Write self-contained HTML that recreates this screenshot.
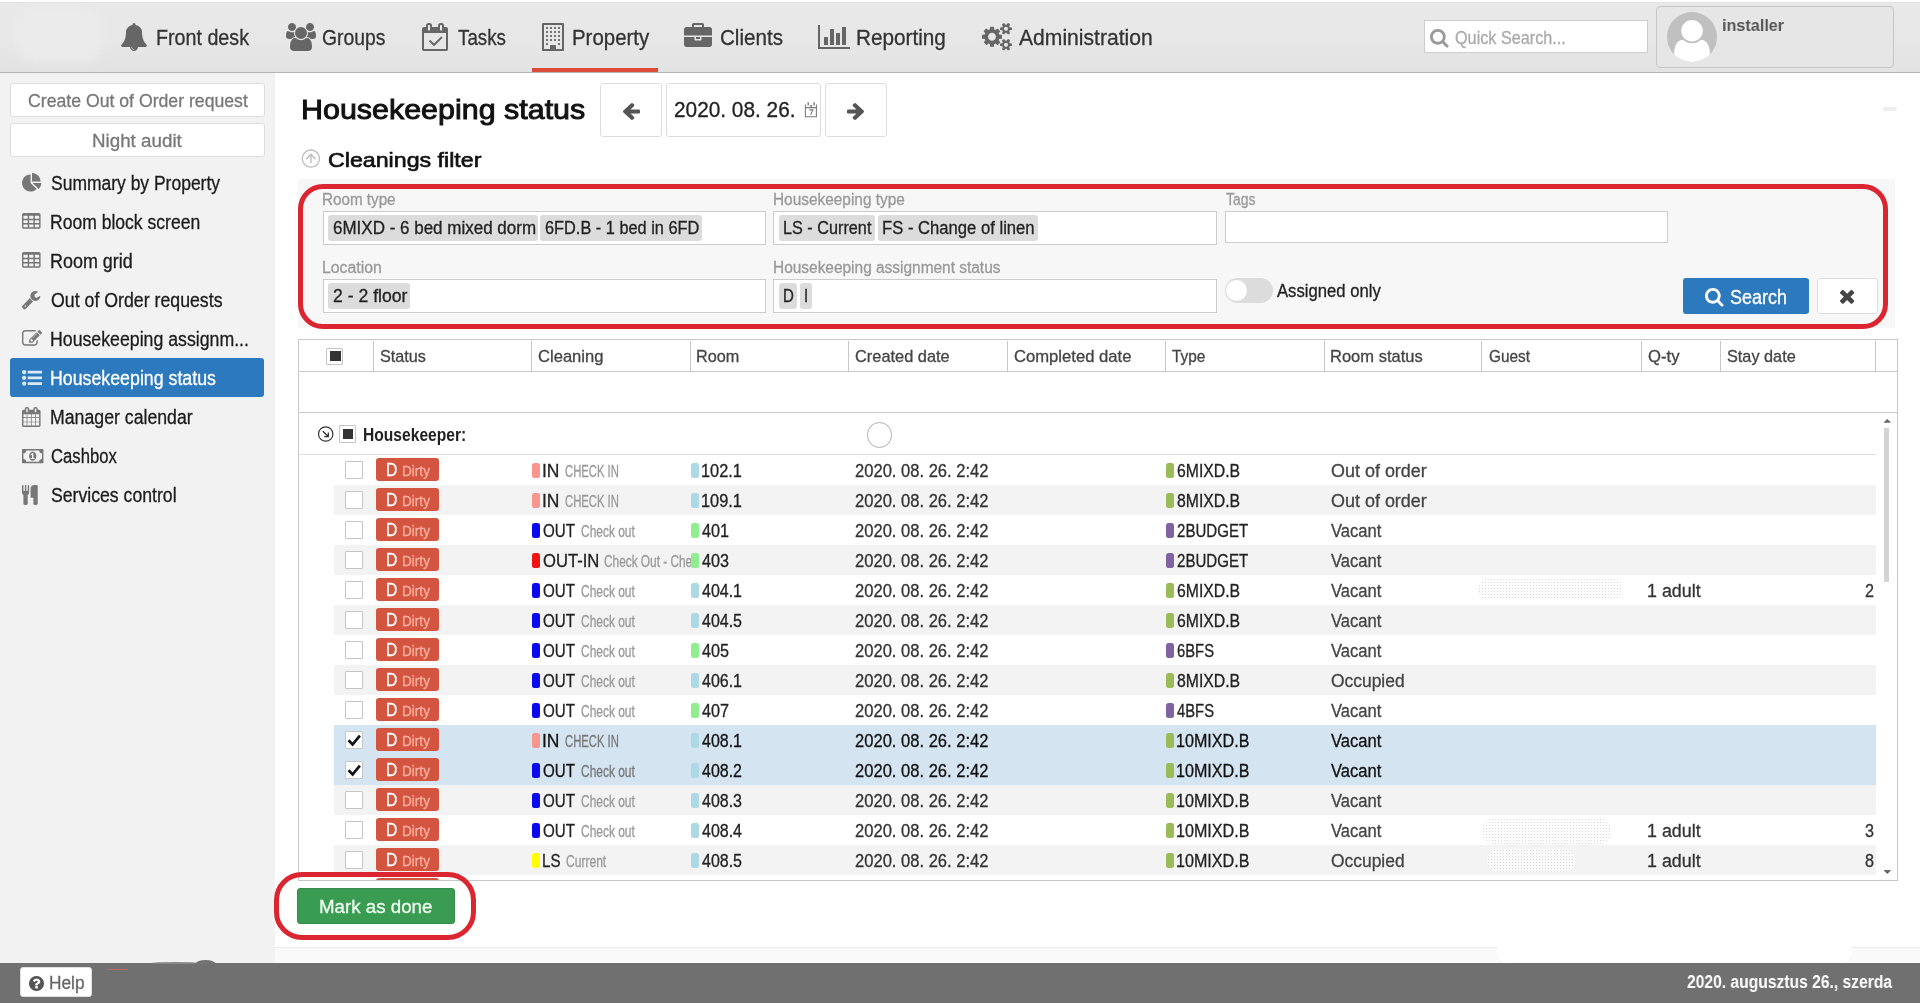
<!DOCTYPE html>
<html lang="en"><head><meta charset="utf-8"><title>Housekeeping status</title>
<style>
html,body{margin:0;padding:0}
body{width:1920px;height:1003px;position:relative;overflow:hidden;background:#fff;font-family:"Liberation Sans",sans-serif}
#app{position:absolute;left:0;top:0;width:1920px;height:1003px;will-change:transform}
.b{position:absolute;box-sizing:border-box}
.t{position:absolute;white-space:nowrap;line-height:1;transform-origin:0 0;-webkit-text-stroke:0.3px currentColor}
.i{position:absolute;display:block;overflow:visible}
</style></head>
<body>
<div id="app">
<div class="b" style="left:0px;top:0px;width:1920px;height:72px;background:linear-gradient(#e9e9e9,#e7e7e7 55%,#e3e3e3)"></div>
<div class="b" style="left:0px;top:0px;width:1920px;height:2px;background:#fefefe"></div>
<div class="b" style="left:0px;top:2px;width:1920px;height:1px;background:#e3e3e3"></div>
<div class="b" style="left:0px;top:72px;width:1920px;height:1px;background:#b4b4b4"></div>
<div class="b" style="left:0px;top:73px;width:275px;height:890px;background:#f2f2f2"></div>
<div class="b" style="left:275px;top:947px;width:1645px;height:1px;background:#ebebeb"></div>
<div class="b" style="left:275px;top:948px;width:1645px;height:15px;background:#fafafa"></div>
<div class="b" style="left:1497px;top:939px;width:355px;height:24px;background:#fff;border-radius:10px"></div>
<div class="b" style="left:0px;top:963px;width:1920px;height:40px;background:#707070"></div>
<div class="b" style="left:196px;top:960.4px;width:19px;height:6px;background:#727272;border-radius:50%"></div>
<div class="b" style="left:152px;top:962.3px;width:46px;height:2px;background:#8a8a8a;border-radius:50%"></div>
<div class="b" style="left:107px;top:969px;width:21px;height:1px;background:#b9695f"></div>
<div class="b" style="left:14px;top:8px;width:90px;height:54px;background:#ebebeb;border-radius:22px;filter:blur(5px)"></div>
<svg class="i" style="left:121.00px;top:23.00px;" width="26.00" height="28.00" viewBox="64 -1536 1664 1792" preserveAspectRatio="none"><path fill="#666" transform="scale(1,-1)" d="M896 -144Q837 -144 794.5 -101.5Q752 -59 752 0Q752 16 736 16Q720 16 720 0Q720 -73 771.5 -124.5Q823 -176 896 -176Q912 -176 912 -160Q912 -144 896 -144ZM1728 128Q1728 76 1690 38Q1652 0 1600 0H1152Q1152 -106 1077 -181Q1002 -256 896 -256Q790 -256 715 -181Q640 -106 640 0H192Q140 0 102 38Q64 76 64 128Q114 170 155 216Q196 262 240 335.5Q284 409 314.5 494Q345 579 364.5 700Q384 821 384 960Q384 1112 501 1242.5Q618 1373 808 1401Q800 1420 800 1440Q800 1480 828 1508Q856 1536 896 1536Q936 1536 964 1508Q992 1480 992 1440Q992 1420 984 1401Q1174 1373 1291 1242.5Q1408 1112 1408 960Q1408 821 1427.5 700Q1447 579 1477.5 494Q1508 409 1552 335.5Q1596 262 1637 216Q1678 170 1728 128Z"/></svg>
<span class="t" style="left:156.11px;top:27px;font-size:22px;color:#333;transform:scaleX(0.8948);">Front desk</span>
<svg class="i" style="left:285.75px;top:23.00px;" width="30.00" height="28.00" viewBox="0 -1536 1920 1792" preserveAspectRatio="none"><path fill="#666" transform="scale(1,-1)" d="M593 640Q431 635 328 512H194Q112 512 56 552.5Q0 593 0 671Q0 1024 124 1024Q130 1024 167.5 1003Q205 982 265 960.5Q325 939 384 939Q451 939 517 962Q512 925 512 896Q512 757 593 640ZM1664 3Q1664 -117 1591 -186.5Q1518 -256 1397 -256H523Q402 -256 329 -186.5Q256 -117 256 3Q256 56 259.5 106.5Q263 157 273.5 215.5Q284 274 300 324Q316 374 343 421.5Q370 469 405 502.5Q440 536 490.5 556Q541 576 602 576Q612 576 645 554.5Q678 533 718 506.5Q758 480 825 458.5Q892 437 960 437Q1028 437 1095 458.5Q1162 480 1202 506.5Q1242 533 1275 554.5Q1308 576 1318 576Q1379 576 1429.5 556Q1480 536 1515 502.5Q1550 469 1577 421.5Q1604 374 1620 324Q1636 274 1646.5 215.5Q1657 157 1660.5 106.5Q1664 56 1664 3ZM565 1461Q640 1386 640 1280Q640 1174 565 1099Q490 1024 384 1024Q278 1024 203 1099Q128 1174 128 1280Q128 1386 203 1461Q278 1536 384 1536Q490 1536 565 1461ZM1231.5 1167.5Q1344 1055 1344 896Q1344 737 1231.5 624.5Q1119 512 960 512Q801 512 688.5 624.5Q576 737 576 896Q576 1055 688.5 1167.5Q801 1280 960 1280Q1119 1280 1231.5 1167.5ZM1920 671Q1920 593 1864 552.5Q1808 512 1726 512H1592Q1489 635 1327 640Q1408 757 1408 896Q1408 925 1403 962Q1469 939 1536 939Q1595 939 1655 960.5Q1715 982 1752.5 1003Q1790 1024 1796 1024Q1920 1024 1920 671ZM1717 1461Q1792 1386 1792 1280Q1792 1174 1717 1099Q1642 1024 1536 1024Q1430 1024 1355 1099Q1280 1174 1280 1280Q1280 1386 1355 1461Q1430 1536 1536 1536Q1642 1536 1717 1461Z"/></svg>
<span class="t" style="left:321.62px;top:27px;font-size:22px;color:#333;transform:scaleX(0.8785);">Groups</span>
<svg class="i" style="left:422.00px;top:23.00px;" width="26.00" height="28.00" viewBox="0 -1536 1664 1792" preserveAspectRatio="none"><path fill="#666" transform="scale(1,-1)" d="M1303 572 791 60Q781 51 768 51Q755 51 745 60L457 348Q448 358 448 371Q448 384 457 393L503 439Q512 448 525 448Q538 448 548 439L768 219L1212 663Q1222 672 1235 672Q1248 672 1257 663L1303 617Q1312 608 1312 595Q1312 582 1303 572ZM128 -128H1536V896H128ZM512 1088V1376Q512 1390 503 1399Q494 1408 480 1408H416Q402 1408 393 1399Q384 1390 384 1376V1088Q384 1074 393 1065Q402 1056 416 1056H480Q494 1056 503 1065Q512 1074 512 1088ZM1280 1088V1376Q1280 1390 1271 1399Q1262 1408 1248 1408H1184Q1170 1408 1161 1399Q1152 1390 1152 1376V1088Q1152 1074 1161 1065Q1170 1056 1184 1056H1248Q1262 1056 1271 1065Q1280 1074 1280 1088ZM1664 1152V-128Q1664 -180 1626 -218Q1588 -256 1536 -256H128Q76 -256 38 -218Q0 -180 0 -128V1152Q0 1204 38 1242Q76 1280 128 1280H256V1376Q256 1442 303 1489Q350 1536 416 1536H480Q546 1536 593 1489Q640 1442 640 1376V1280H1024V1376Q1024 1442 1071 1489Q1118 1536 1184 1536H1248Q1314 1536 1361 1489Q1408 1442 1408 1376V1280H1536Q1588 1280 1626 1242Q1664 1204 1664 1152Z"/></svg>
<span class="t" style="left:458.00px;top:27px;font-size:22px;color:#333;transform:scaleX(0.8536);">Tasks</span>
<svg class="i" style="left:542.00px;top:23.00px;" width="22.00" height="28.00" viewBox="0 -1536 1408 1792" preserveAspectRatio="none"><path fill="#666" transform="scale(1,-1)" d="M384 224V160Q384 147 374.5 137.5Q365 128 352 128H288Q275 128 265.5 137.5Q256 147 256 160V224Q256 237 265.5 246.5Q275 256 288 256H352Q365 256 374.5 246.5Q384 237 384 224ZM384 480V416Q384 403 374.5 393.5Q365 384 352 384H288Q275 384 265.5 393.5Q256 403 256 416V480Q256 493 265.5 502.5Q275 512 288 512H352Q365 512 374.5 502.5Q384 493 384 480ZM640 480V416Q640 403 630.5 393.5Q621 384 608 384H544Q531 384 521.5 393.5Q512 403 512 416V480Q512 493 521.5 502.5Q531 512 544 512H608Q621 512 630.5 502.5Q640 493 640 480ZM384 736V672Q384 659 374.5 649.5Q365 640 352 640H288Q275 640 265.5 649.5Q256 659 256 672V736Q256 749 265.5 758.5Q275 768 288 768H352Q365 768 374.5 758.5Q384 749 384 736ZM1152 224V160Q1152 147 1142.5 137.5Q1133 128 1120 128H1056Q1043 128 1033.5 137.5Q1024 147 1024 160V224Q1024 237 1033.5 246.5Q1043 256 1056 256H1120Q1133 256 1142.5 246.5Q1152 237 1152 224ZM896 480V416Q896 403 886.5 393.5Q877 384 864 384H800Q787 384 777.5 393.5Q768 403 768 416V480Q768 493 777.5 502.5Q787 512 800 512H864Q877 512 886.5 502.5Q896 493 896 480ZM640 736V672Q640 659 630.5 649.5Q621 640 608 640H544Q531 640 521.5 649.5Q512 659 512 672V736Q512 749 521.5 758.5Q531 768 544 768H608Q621 768 630.5 758.5Q640 749 640 736ZM384 992V928Q384 915 374.5 905.5Q365 896 352 896H288Q275 896 265.5 905.5Q256 915 256 928V992Q256 1005 265.5 1014.5Q275 1024 288 1024H352Q365 1024 374.5 1014.5Q384 1005 384 992ZM1152 480V416Q1152 403 1142.5 393.5Q1133 384 1120 384H1056Q1043 384 1033.5 393.5Q1024 403 1024 416V480Q1024 493 1033.5 502.5Q1043 512 1056 512H1120Q1133 512 1142.5 502.5Q1152 493 1152 480ZM896 736V672Q896 659 886.5 649.5Q877 640 864 640H800Q787 640 777.5 649.5Q768 659 768 672V736Q768 749 777.5 758.5Q787 768 800 768H864Q877 768 886.5 758.5Q896 749 896 736ZM640 992V928Q640 915 630.5 905.5Q621 896 608 896H544Q531 896 521.5 905.5Q512 915 512 928V992Q512 1005 521.5 1014.5Q531 1024 544 1024H608Q621 1024 630.5 1014.5Q640 1005 640 992ZM384 1248V1184Q384 1171 374.5 1161.5Q365 1152 352 1152H288Q275 1152 265.5 1161.5Q256 1171 256 1184V1248Q256 1261 265.5 1270.5Q275 1280 288 1280H352Q365 1280 374.5 1270.5Q384 1261 384 1248ZM1152 736V672Q1152 659 1142.5 649.5Q1133 640 1120 640H1056Q1043 640 1033.5 649.5Q1024 659 1024 672V736Q1024 749 1033.5 758.5Q1043 768 1056 768H1120Q1133 768 1142.5 758.5Q1152 749 1152 736ZM896 992V928Q896 915 886.5 905.5Q877 896 864 896H800Q787 896 777.5 905.5Q768 915 768 928V992Q768 1005 777.5 1014.5Q787 1024 800 1024H864Q877 1024 886.5 1014.5Q896 1005 896 992ZM640 1248V1184Q640 1171 630.5 1161.5Q621 1152 608 1152H544Q531 1152 521.5 1161.5Q512 1171 512 1184V1248Q512 1261 521.5 1270.5Q531 1280 544 1280H608Q621 1280 630.5 1270.5Q640 1261 640 1248ZM1152 992V928Q1152 915 1142.5 905.5Q1133 896 1120 896H1056Q1043 896 1033.5 905.5Q1024 915 1024 928V992Q1024 1005 1033.5 1014.5Q1043 1024 1056 1024H1120Q1133 1024 1142.5 1014.5Q1152 1005 1152 992ZM896 1248V1184Q896 1171 886.5 1161.5Q877 1152 864 1152H800Q787 1152 777.5 1161.5Q768 1171 768 1184V1248Q768 1261 777.5 1270.5Q787 1280 800 1280H864Q877 1280 886.5 1270.5Q896 1261 896 1248ZM1152 1248V1184Q1152 1171 1142.5 1161.5Q1133 1152 1120 1152H1056Q1043 1152 1033.5 1161.5Q1024 1171 1024 1184V1248Q1024 1261 1033.5 1270.5Q1043 1280 1056 1280H1120Q1133 1280 1142.5 1270.5Q1152 1261 1152 1248ZM896 -128H1280V1408H128V-128H512V96Q512 109 521.5 118.5Q531 128 544 128H864Q877 128 886.5 118.5Q896 109 896 96ZM1408 1472V-192Q1408 -218 1389 -237Q1370 -256 1344 -256H64Q38 -256 19 -237Q0 -218 0 -192V1472Q0 1498 19 1517Q38 1536 64 1536H1344Q1370 1536 1389 1517Q1408 1498 1408 1472Z"/></svg>
<span class="t" style="left:571.57px;top:27px;font-size:22px;color:#333;transform:scaleX(0.9282);">Property</span>
<svg class="i" style="left:683.75px;top:23.00px;" width="28.00" height="24.00" viewBox="0 -1536 1792 1536" preserveAspectRatio="none"><path fill="#666" transform="scale(1,-1)" d="M640 1280H1152V1408H640ZM1792 640V160Q1792 94 1745 47Q1698 0 1632 0H160Q94 0 47 47Q0 94 0 160V640H672V480Q672 454 691 435Q710 416 736 416H1056Q1082 416 1101 435Q1120 454 1120 480V640ZM1024 640V512H768V640ZM1792 1120V736H0V1120Q0 1186 47 1233Q94 1280 160 1280H512V1440Q512 1480 540 1508Q568 1536 608 1536H1184Q1224 1536 1252 1508Q1280 1480 1280 1440V1280H1632Q1698 1280 1745 1233Q1792 1186 1792 1120Z"/></svg>
<span class="t" style="left:719.56px;top:27px;font-size:22px;color:#333;transform:scaleX(0.9359);">Clients</span>
<svg class="i" style="left:817.50px;top:25.00px;" width="32.00" height="24.00" viewBox="0 -1408 2048 1536" preserveAspectRatio="none"><path fill="#666" transform="scale(1,-1)" d="M640 640V128H384V640ZM1024 1152V128H768V1152ZM2048 0V-128H0V1408H128V0ZM1408 896V128H1152V896ZM1792 1280V128H1536V1280Z"/></svg>
<span class="t" style="left:855.81px;top:27px;font-size:22px;color:#333;transform:scaleX(0.9420);">Reporting</span>
<svg class="i" style="left:982.00px;top:23.25px;" width="30.00" height="27.52" viewBox="0 -1520 1920 1761" preserveAspectRatio="none"><path fill="#666" transform="scale(1,-1)" d="M821 459Q896 534 896 640Q896 746 821 821Q746 896 640 896Q534 896 459 821Q384 746 384 640Q384 534 459 459Q534 384 640 384Q746 384 821 459ZM1664 128Q1664 180 1626 218Q1588 256 1536 256Q1484 256 1446 218Q1408 180 1408 128Q1408 75 1445.5 37.5Q1483 0 1536 0Q1589 0 1626.5 37.5Q1664 75 1664 128ZM1664 1152Q1664 1204 1626 1242Q1588 1280 1536 1280Q1484 1280 1446 1242Q1408 1204 1408 1152Q1408 1099 1445.5 1061.5Q1483 1024 1536 1024Q1589 1024 1626.5 1061.5Q1664 1099 1664 1152ZM1280 731V546Q1280 536 1273 526.5Q1266 517 1257 516L1102 492Q1091 457 1070 416Q1104 368 1160 301Q1167 290 1167 281Q1167 269 1160 262Q1137 232 1077.5 172.5Q1018 113 999 113Q988 113 978 120L863 210Q826 191 786 179Q775 71 763 24Q756 0 733 0H547Q536 0 527 7.5Q518 15 517 25L494 178Q460 188 419 209L301 120Q294 113 281 113Q270 113 260 121Q116 254 116 281Q116 290 123 300Q133 314 164 353Q195 392 211 414Q188 458 176 496L24 520Q14 521 7 529.5Q0 538 0 549V734Q0 744 7 753.5Q14 763 23 764L178 788Q189 823 210 864Q176 912 120 979Q113 990 113 999Q113 1011 120 1019Q142 1049 202 1108Q262 1167 281 1167Q292 1167 302 1160L417 1070Q451 1088 494 1102Q505 1210 517 1256Q524 1280 547 1280H733Q744 1280 753 1272.5Q762 1265 763 1255L786 1102Q820 1092 861 1071L979 1160Q987 1167 999 1167Q1010 1167 1020 1159Q1164 1026 1164 999Q1164 991 1157 980Q1145 964 1115 926Q1085 888 1070 866Q1093 818 1104 784L1256 761Q1266 759 1273 750.5Q1280 742 1280 731ZM1920 198V58Q1920 42 1771 27Q1759 0 1741 -25Q1792 -138 1792 -163Q1792 -167 1788 -170Q1666 -241 1664 -241Q1656 -241 1618 -194Q1580 -147 1566 -126Q1546 -128 1536 -128Q1526 -128 1506 -126Q1492 -147 1454 -194Q1416 -241 1408 -241Q1406 -241 1284 -170Q1280 -167 1280 -163Q1280 -138 1331 -25Q1313 0 1301 27Q1152 42 1152 58V198Q1152 214 1301 229Q1314 258 1331 281Q1280 394 1280 419Q1280 423 1284 426Q1288 428 1319 446Q1350 464 1378 480Q1406 496 1408 496Q1416 496 1454 449.5Q1492 403 1506 382Q1526 384 1536 384Q1546 384 1566 382Q1617 453 1658 494L1664 496Q1668 496 1788 426Q1792 423 1792 419Q1792 394 1741 281Q1758 258 1771 229Q1920 214 1920 198ZM1920 1222V1082Q1920 1066 1771 1051Q1759 1024 1741 999Q1792 886 1792 861Q1792 857 1788 854Q1666 783 1664 783Q1656 783 1618 830Q1580 877 1566 898Q1546 896 1536 896Q1526 896 1506 898Q1492 877 1454 830Q1416 783 1408 783Q1406 783 1284 854Q1280 857 1280 861Q1280 886 1331 999Q1313 1024 1301 1051Q1152 1066 1152 1082V1222Q1152 1238 1301 1253Q1314 1282 1331 1305Q1280 1418 1280 1443Q1280 1447 1284 1450Q1288 1452 1319 1470Q1350 1488 1378 1504Q1406 1520 1408 1520Q1416 1520 1454 1473.5Q1492 1427 1506 1406Q1526 1408 1536 1408Q1546 1408 1566 1406Q1617 1477 1658 1518L1664 1520Q1668 1520 1788 1450Q1792 1447 1792 1443Q1792 1418 1741 1305Q1758 1282 1771 1253Q1920 1238 1920 1222Z"/></svg>
<span class="t" style="left:1018.75px;top:27px;font-size:22px;color:#333;transform:scaleX(0.9591);">Administration</span>
<div class="b" style="left:532px;top:68px;width:126px;height:4px;background:#dd4b39"></div>
<div class="b" style="left:1424px;top:20px;width:224px;height:33px;background:#fff;border:1px solid #ccc"></div>
<svg class="i" style="left:1430.00px;top:28.89px;" width="18.57" height="18.57" viewBox="0 -1408 1664 1664" preserveAspectRatio="none"><path fill="#999" transform="scale(1,-1)" d="M1020.5 387.5Q1152 519 1152 704Q1152 889 1020.5 1020.5Q889 1152 704 1152Q519 1152 387.5 1020.5Q256 889 256 704Q256 519 387.5 387.5Q519 256 704 256Q889 256 1020.5 387.5ZM1664 -128Q1664 -180 1626 -218Q1588 -256 1536 -256Q1482 -256 1446 -218L1103 124Q924 0 704 0Q561 0 430.5 55.5Q300 111 205.5 205.5Q111 300 55.5 430.5Q0 561 0 704Q0 847 55.5 977.5Q111 1108 205.5 1202.5Q300 1297 430.5 1352.5Q561 1408 704 1408Q847 1408 977.5 1352.5Q1108 1297 1202.5 1202.5Q1297 1108 1352.5 977.5Q1408 847 1408 704Q1408 484 1284 305L1627 -38Q1664 -75 1664 -128Z"/></svg>
<span class="t" style="left:1454.50px;top:28px;font-size:19px;color:#aaa;transform:scaleX(0.8534);">Quick Search...</span>
<div class="b" style="left:1656px;top:6px;width:238px;height:62px;background:#e6e6e6;border:1px solid #c6c6c6;border-radius:4px"></div>
<div class="b" style="left:1667px;top:12px;width:50px;height:50px;border-radius:50%;background:#c0c0c0;overflow:hidden">
<svg class="i" style="left:7px;top:8px" width="36" height="43" viewBox="0 -1408 1280 1536" preserveAspectRatio="none"><path fill="#fff" transform="scale(1,-1)" d="M1280 137Q1280 28 1217.5 -50Q1155 -128 1067 -128H213Q125 -128 62.5 -50Q0 28 0 137Q0 222 8.5 297.5Q17 373 40 449.5Q63 526 98.5 580.5Q134 635 192.5 669.5Q251 704 327 704Q458 576 640 576Q822 576 953 704Q1029 704 1087.5 669.5Q1146 635 1181.5 580.5Q1217 526 1240 449.5Q1263 373 1271.5 297.5Q1280 222 1280 137ZM911.5 1295.5Q1024 1183 1024 1024Q1024 865 911.5 752.5Q799 640 640 640Q481 640 368.5 752.5Q256 865 256 1024Q256 1183 368.5 1295.5Q481 1408 640 1408Q799 1408 911.5 1295.5Z"/></svg></div>
<span class="t" style="left:1721.55px;top:17px;font-size:17px;color:#555;transform:scaleX(0.9523);font-weight:700;-webkit-text-stroke:0;">installer</span>
<div class="b" style="left:1883px;top:107px;width:14px;height:4px;background:#eee;border-radius:2px"></div>
<div class="b" style="left:10px;top:83px;width:255px;height:34px;background:#fff;border:1px solid #ddd;border-radius:3px"></div>
<div class="b" style="left:10px;top:123px;width:255px;height:34px;background:#fff;border:1px solid #ddd;border-radius:3px"></div>
<span class="t" style="left:27.50px;top:91px;font-size:19px;color:#777;transform:scaleX(0.9293);">Create Out of Order request</span>
<span class="t" style="left:91.51px;top:131px;font-size:19px;color:#777;transform:scaleX(0.9883);">Night audit</span>
<div class="b" style="left:10px;top:358px;width:254px;height:39px;background:#2c79be;border-radius:3px"></div>
<svg class="i" style="left:22.00px;top:172.86px;" width="19.29" height="18.57" viewBox="0 -1536 1728 1664" preserveAspectRatio="none"><path fill="#777" transform="scale(1,-1)" d="M768 646 1314 100Q1208 -8 1066.5 -68Q925 -128 768 -128Q559 -128 382.5 -25Q206 78 103 254.5Q0 431 0 640Q0 849 103 1025.5Q206 1202 382.5 1305Q559 1408 768 1408ZM955 640H1728Q1728 483 1668 341.5Q1608 200 1500 94ZM1664 768H896V1536Q1105 1536 1281.5 1433Q1458 1330 1561 1153.5Q1664 977 1664 768Z"/></svg>
<span class="t" style="left:50.75px;top:174px;font-size:19.5px;color:#1c1c1c;transform:scaleX(0.8964);">Summary by Property</span>
<svg class="i" style="left:22.00px;top:213.29px;" width="18.57" height="15.71" viewBox="0 -1408 1664 1408" preserveAspectRatio="none"><path fill="#777" transform="scale(1,-1)" d="M512 160V352Q512 366 503 375Q494 384 480 384H160Q146 384 137 375Q128 366 128 352V160Q128 146 137 137Q146 128 160 128H480Q494 128 503 137Q512 146 512 160ZM512 544V736Q512 750 503 759Q494 768 480 768H160Q146 768 137 759Q128 750 128 736V544Q128 530 137 521Q146 512 160 512H480Q494 512 503 521Q512 530 512 544ZM1024 160V352Q1024 366 1015 375Q1006 384 992 384H672Q658 384 649 375Q640 366 640 352V160Q640 146 649 137Q658 128 672 128H992Q1006 128 1015 137Q1024 146 1024 160ZM512 928V1120Q512 1134 503 1143Q494 1152 480 1152H160Q146 1152 137 1143Q128 1134 128 1120V928Q128 914 137 905Q146 896 160 896H480Q494 896 503 905Q512 914 512 928ZM1024 544V736Q1024 750 1015 759Q1006 768 992 768H672Q658 768 649 759Q640 750 640 736V544Q640 530 649 521Q658 512 672 512H992Q1006 512 1015 521Q1024 530 1024 544ZM1536 160V352Q1536 366 1527 375Q1518 384 1504 384H1184Q1170 384 1161 375Q1152 366 1152 352V160Q1152 146 1161 137Q1170 128 1184 128H1504Q1518 128 1527 137Q1536 146 1536 160ZM1024 928V1120Q1024 1134 1015 1143Q1006 1152 992 1152H672Q658 1152 649 1143Q640 1134 640 1120V928Q640 914 649 905Q658 896 672 896H992Q1006 896 1015 905Q1024 914 1024 928ZM1536 544V736Q1536 750 1527 759Q1518 768 1504 768H1184Q1170 768 1161 759Q1152 750 1152 736V544Q1152 530 1161 521Q1170 512 1184 512H1504Q1518 512 1527 521Q1536 530 1536 544ZM1536 928V1120Q1536 1134 1527 1143Q1518 1152 1504 1152H1184Q1170 1152 1161 1143Q1152 1134 1152 1120V928Q1152 914 1161 905Q1170 896 1184 896H1504Q1518 896 1527 905Q1536 914 1536 928ZM1664 1248V160Q1664 94 1617 47Q1570 0 1504 0H160Q94 0 47 47Q0 94 0 160V1248Q0 1314 47 1361Q94 1408 160 1408H1504Q1570 1408 1617 1361Q1664 1314 1664 1248Z"/></svg>
<span class="t" style="left:49.85px;top:213px;font-size:19.5px;color:#1c1c1c;transform:scaleX(0.8997);">Room block screen</span>
<svg class="i" style="left:22.00px;top:252.29px;" width="18.57" height="15.71" viewBox="0 -1408 1664 1408" preserveAspectRatio="none"><path fill="#777" transform="scale(1,-1)" d="M512 160V352Q512 366 503 375Q494 384 480 384H160Q146 384 137 375Q128 366 128 352V160Q128 146 137 137Q146 128 160 128H480Q494 128 503 137Q512 146 512 160ZM512 544V736Q512 750 503 759Q494 768 480 768H160Q146 768 137 759Q128 750 128 736V544Q128 530 137 521Q146 512 160 512H480Q494 512 503 521Q512 530 512 544ZM1024 160V352Q1024 366 1015 375Q1006 384 992 384H672Q658 384 649 375Q640 366 640 352V160Q640 146 649 137Q658 128 672 128H992Q1006 128 1015 137Q1024 146 1024 160ZM512 928V1120Q512 1134 503 1143Q494 1152 480 1152H160Q146 1152 137 1143Q128 1134 128 1120V928Q128 914 137 905Q146 896 160 896H480Q494 896 503 905Q512 914 512 928ZM1024 544V736Q1024 750 1015 759Q1006 768 992 768H672Q658 768 649 759Q640 750 640 736V544Q640 530 649 521Q658 512 672 512H992Q1006 512 1015 521Q1024 530 1024 544ZM1536 160V352Q1536 366 1527 375Q1518 384 1504 384H1184Q1170 384 1161 375Q1152 366 1152 352V160Q1152 146 1161 137Q1170 128 1184 128H1504Q1518 128 1527 137Q1536 146 1536 160ZM1024 928V1120Q1024 1134 1015 1143Q1006 1152 992 1152H672Q658 1152 649 1143Q640 1134 640 1120V928Q640 914 649 905Q658 896 672 896H992Q1006 896 1015 905Q1024 914 1024 928ZM1536 544V736Q1536 750 1527 759Q1518 768 1504 768H1184Q1170 768 1161 759Q1152 750 1152 736V544Q1152 530 1161 521Q1170 512 1184 512H1504Q1518 512 1527 521Q1536 530 1536 544ZM1536 928V1120Q1536 1134 1527 1143Q1518 1152 1504 1152H1184Q1170 1152 1161 1143Q1152 1134 1152 1120V928Q1152 914 1161 905Q1170 896 1184 896H1504Q1518 896 1527 905Q1536 914 1536 928ZM1664 1248V160Q1664 94 1617 47Q1570 0 1504 0H160Q94 0 47 47Q0 94 0 160V1248Q0 1314 47 1361Q94 1408 160 1408H1504Q1570 1408 1617 1361Q1664 1314 1664 1248Z"/></svg>
<span class="t" style="left:49.83px;top:252px;font-size:19.5px;color:#1c1c1c;transform:scaleX(0.9194);">Room grid</span>
<svg class="i" style="left:22.23px;top:291.29px;" width="18.31" height="18.34" viewBox="21 -1408 1641 1643" preserveAspectRatio="none"><path fill="#777" transform="scale(1,-1)" d="M365 19Q384 38 384 64Q384 90 365 109Q346 128 320 128Q294 128 275 109Q256 90 256 64Q256 38 275 19Q294 0 320 0Q346 0 365 19ZM1028 484 346 -198Q309 -235 256 -235Q204 -235 165 -198L59 -90Q21 -54 21 0Q21 53 59 91L740 772Q779 674 854.5 598.5Q930 523 1028 484ZM1662 919Q1662 880 1639 813Q1592 679 1474.5 595.5Q1357 512 1216 512Q1031 512 899.5 643.5Q768 775 768 960Q768 1145 899.5 1276.5Q1031 1408 1216 1408Q1274 1408 1337.5 1391.5Q1401 1375 1445 1345Q1461 1334 1461 1317Q1461 1300 1445 1289L1152 1120V896L1345 789Q1350 792 1424 837.5Q1498 883 1559.5 918.5Q1621 954 1630 954Q1645 954 1653.5 944Q1662 934 1662 919Z"/></svg>
<span class="t" style="left:50.75px;top:291px;font-size:19.5px;color:#1c1c1c;transform:scaleX(0.9095);">Out of Order requests</span>
<svg class="i" style="left:22.00px;top:330.29px;" width="19.91" height="15.71" viewBox="0 -1408 1784 1408" preserveAspectRatio="none"><path fill="#777" transform="scale(1,-1)" d="M888 352 1004 468 852 620 736 504V448H832V352ZM1295 1071 945 721Q928 704 944 688Q960 672 977 689L1327 1039Q1344 1056 1328 1072Q1312 1088 1295 1071ZM1408 478V288Q1408 169 1323.5 84.5Q1239 0 1120 0H288Q169 0 84.5 84.5Q0 169 0 288V1120Q0 1239 84.5 1323.5Q169 1408 288 1408H1120Q1183 1408 1237 1383Q1252 1376 1255 1360Q1258 1343 1246 1331L1197 1282Q1183 1268 1165 1274Q1142 1280 1120 1280H288Q222 1280 175 1233Q128 1186 128 1120V288Q128 222 175 175Q222 128 288 128H1120Q1186 128 1233 175Q1280 222 1280 288V414Q1280 427 1289 436L1353 500Q1368 515 1388 507Q1408 499 1408 478ZM1312 1216 1600 928 928 256H640V544ZM1756 1084 1664 992 1376 1280 1468 1372Q1496 1400 1536 1400Q1576 1400 1604 1372L1756 1220Q1784 1192 1784 1152Q1784 1112 1756 1084Z"/></svg>
<span class="t" style="left:49.84px;top:330px;font-size:19.5px;color:#1c1c1c;transform:scaleX(0.9086);">Housekeeping assignm...</span>
<svg class="i" style="left:22.00px;top:370.00px;" width="20.00" height="15.71" viewBox="0 -1344 1792 1408" preserveAspectRatio="none"><path fill="#dce9f5" transform="scale(1,-1)" d="M328 264Q384 208 384 128Q384 48 328 -8Q272 -64 192 -64Q112 -64 56 -8Q0 48 0 128Q0 208 56 264Q112 320 192 320Q272 320 328 264ZM328 776Q384 720 384 640Q384 560 328 504Q272 448 192 448Q112 448 56 504Q0 560 0 640Q0 720 56 776Q112 832 192 832Q272 832 328 776ZM1792 224V32Q1792 19 1782.5 9.5Q1773 0 1760 0H544Q531 0 521.5 9.5Q512 19 512 32V224Q512 237 521.5 246.5Q531 256 544 256H1760Q1773 256 1782.5 246.5Q1792 237 1792 224ZM328 1288Q384 1232 384 1152Q384 1072 328 1016Q272 960 192 960Q112 960 56 1016Q0 1072 0 1152Q0 1232 56 1288Q112 1344 192 1344Q272 1344 328 1288ZM1792 736V544Q1792 531 1782.5 521.5Q1773 512 1760 512H544Q531 512 521.5 521.5Q512 531 512 544V736Q512 749 521.5 758.5Q531 768 544 768H1760Q1773 768 1782.5 758.5Q1792 749 1792 736ZM1792 1248V1056Q1792 1043 1782.5 1033.5Q1773 1024 1760 1024H544Q531 1024 521.5 1033.5Q512 1043 512 1056V1248Q512 1261 521.5 1270.5Q531 1280 544 1280H1760Q1773 1280 1782.5 1270.5Q1792 1261 1792 1248Z"/></svg>
<span class="t" style="left:49.84px;top:369px;font-size:19.5px;color:#fff;transform:scaleX(0.9111);">Housekeeping status</span>
<svg class="i" style="left:22.00px;top:406.86px;" width="18.57" height="20.00" viewBox="0 -1536 1664 1792" preserveAspectRatio="none"><path fill="#777" transform="scale(1,-1)" d="M128 -128H416V160H128ZM480 -128H800V160H480ZM128 224H416V544H128ZM480 224H800V544H480ZM128 608H416V896H128ZM864 -128H1184V160H864ZM480 608H800V896H480ZM1248 -128H1536V160H1248ZM864 224H1184V544H864ZM512 1088V1376Q512 1389 502.5 1398.5Q493 1408 480 1408H416Q403 1408 393.5 1398.5Q384 1389 384 1376V1088Q384 1075 393.5 1065.5Q403 1056 416 1056H480Q493 1056 502.5 1065.5Q512 1075 512 1088ZM1248 224H1536V544H1248ZM864 608H1184V896H864ZM1248 608H1536V896H1248ZM1280 1088V1376Q1280 1389 1270.5 1398.5Q1261 1408 1248 1408H1184Q1171 1408 1161.5 1398.5Q1152 1389 1152 1376V1088Q1152 1075 1161.5 1065.5Q1171 1056 1184 1056H1248Q1261 1056 1270.5 1065.5Q1280 1075 1280 1088ZM1664 1152V-128Q1664 -180 1626 -218Q1588 -256 1536 -256H128Q76 -256 38 -218Q0 -180 0 -128V1152Q0 1204 38 1242Q76 1280 128 1280H256V1376Q256 1442 303 1489Q350 1536 416 1536H480Q546 1536 593 1489Q640 1442 640 1376V1280H1024V1376Q1024 1442 1071 1489Q1118 1536 1184 1536H1248Q1314 1536 1361 1489Q1408 1442 1408 1376V1280H1536Q1588 1280 1626 1242Q1664 1204 1664 1152Z"/></svg>
<span class="t" style="left:49.84px;top:408px;font-size:19.5px;color:#1c1c1c;transform:scaleX(0.9079);">Manager calendar</span>
<svg class="i" style="left:22.00px;top:448.71px;" width="21.43" height="14.29" viewBox="0 -1280 1920 1280" preserveAspectRatio="none"><path fill="#777" transform="scale(1,-1)" d="M768 384H1152V480H1024V928H910L762 791L839 711Q881 748 894 768H896V480H768ZM1259 782Q1280 710 1280 640Q1280 570 1259 498Q1238 426 1199.5 364Q1161 302 1098 263Q1035 224 960 224Q885 224 822 263Q759 302 720.5 364Q682 426 661 498Q640 570 640 640Q640 710 661 782Q682 854 720.5 916Q759 978 822 1017Q885 1056 960 1056Q1035 1056 1098 1017Q1161 978 1199.5 916Q1238 854 1259 782ZM1792 384V896Q1686 896 1611 971Q1536 1046 1536 1152H384Q384 1046 309 971Q234 896 128 896V384Q234 384 309 309Q384 234 384 128H1536Q1536 234 1611 309Q1686 384 1792 384ZM1920 1216V64Q1920 38 1901 19Q1882 0 1856 0H64Q38 0 19 19Q0 38 0 64V1216Q0 1242 19 1261Q38 1280 64 1280H1856Q1882 1280 1901 1261Q1920 1242 1920 1216Z"/></svg>
<span class="t" style="left:50.75px;top:447px;font-size:19.5px;color:#1c1c1c;transform:scaleX(0.8548);">Cashbox</span>
<svg class="i" style="left:22.00px;top:484.86px;" width="15.71" height="20.00" viewBox="0 -1536 1408 1792" preserveAspectRatio="none"><path fill="#777" transform="scale(1,-1)" d="M640 1472V832Q640 771 604.5 721Q569 671 512 651V-128Q512 -180 474 -218Q436 -256 384 -256H256Q204 -256 166 -218Q128 -180 128 -128V651Q71 671 35.5 721Q0 771 0 832V1472Q0 1498 19 1517Q38 1536 64 1536Q90 1536 109 1517Q128 1498 128 1472V1056Q128 1030 147 1011Q166 992 192 992Q218 992 237 1011Q256 1030 256 1056V1472Q256 1498 275 1517Q294 1536 320 1536Q346 1536 365 1517Q384 1498 384 1472V1056Q384 1030 403 1011Q422 992 448 992Q474 992 493 1011Q512 1030 512 1056V1472Q512 1498 531 1517Q550 1536 576 1536Q602 1536 621 1517Q640 1498 640 1472ZM1408 1472V-128Q1408 -180 1370 -218Q1332 -256 1280 -256H1152Q1100 -256 1062 -218Q1024 -180 1024 -128V384H800Q787 384 777.5 393.5Q768 403 768 416V1216Q768 1348 862 1442Q956 1536 1088 1536H1344Q1370 1536 1389 1517Q1408 1498 1408 1472Z"/></svg>
<span class="t" style="left:50.75px;top:486px;font-size:19.5px;color:#1c1c1c;transform:scaleX(0.9051);">Services control</span>
<span class="t" style="left:300.83px;top:96px;font-size:28px;color:#111;transform:scaleX(1.0870);-webkit-text-stroke:0.95px #111;">Housekeeping status</span>
<div class="b" style="left:600px;top:83px;width:62px;height:54px;background:#fff;border:1px solid #ddd;border-radius:3px"></div>
<div class="b" style="left:666px;top:83px;width:155px;height:54px;background:#fff;border:1px solid #ddd;border-radius:3px"></div>
<div class="b" style="left:825px;top:83px;width:62px;height:54px;background:#fff;border:1px solid #ddd;border-radius:3px"></div>
<svg class="i" style="left:622.50px;top:102.50px;" width="17.00" height="17.00" viewBox="64 -1355 1472 1558" preserveAspectRatio="none"><path fill="#555" transform="scale(1,-1)" d="M1536 640V512Q1536 459 1503.5 421.5Q1471 384 1419 384H715L1008 90Q1046 54 1046 0Q1046 -54 1008 -90L933 -166Q896 -203 843 -203Q791 -203 752 -166L101 486Q64 523 64 576Q64 628 101 667L752 1317Q790 1355 843 1355Q895 1355 933 1317L1008 1243Q1046 1205 1046 1152Q1046 1099 1008 1061L715 768H1419Q1471 768 1503.5 730.5Q1536 693 1536 640Z"/></svg>
<svg class="i" style="left:846.75px;top:102.50px;" width="17.00" height="17.00" viewBox="0 -1355 1472 1558" preserveAspectRatio="none"><path fill="#555" transform="scale(1,-1)" d="M1472 576Q1472 522 1435 485L784 -166Q745 -203 693 -203Q642 -203 603 -166L528 -91Q490 -53 490 0Q490 53 528 91L821 384H117Q65 384 32.5 421.5Q0 459 0 512V640Q0 693 32.5 730.5Q65 768 117 768H821L528 1062Q490 1098 490 1152Q490 1206 528 1242L603 1317Q641 1355 693 1355Q746 1355 784 1317L1435 666Q1472 631 1472 576Z"/></svg>
<span class="t" style="left:673.55px;top:99px;font-size:22px;color:#222;transform:scaleX(0.9459);">2020. 08. 26.</span>
<svg class="i" style="left:804px;top:101px" width="14" height="17" viewBox="0 0 14 17"><g fill="none" stroke="#7a7a7a" stroke-width="1.1"><path d="M1.4 3.4v12.3h11V3.4M1.4 6.6h11M5.3 8.9h3.6l-2.3 4.8"/><path d="M4.2 1.2v3.4M10.1 1.2v3.4" stroke-width="1.4"/><path d="M7.1 4v2.4" stroke-width="1.6"/></g></svg>
<svg class="i" style="left:300px;top:149px" width="22" height="22" viewBox="0 0 22 22"><circle cx="10.9" cy="9.6" r="8.6" fill="none" stroke="#bdbdbd" stroke-width="1.3"/><path d="M10.9 14.2V5.4M6.2 10.2l4.7-4.9 4.7 4.9" fill="none" stroke="#bdbdbd" stroke-width="1.4"/></svg>
<span class="t" style="left:328.20px;top:149px;font-size:21px;color:#111;transform:scaleX(1.1044);-webkit-text-stroke:0.65px #111;">Cleanings filter</span>
<div class="b" style="left:298.4px;top:179px;width:1597px;height:149px;background:#f7f7f7"></div>
<span class="t" style="left:321.85px;top:192px;font-size:16px;color:#999;transform:scaleX(0.9507);">Room type</span>
<span class="t" style="left:773.04px;top:192px;font-size:16px;color:#999;transform:scaleX(0.9626);">Housekeeping type</span>
<span class="t" style="left:1225.50px;top:192px;font-size:16px;color:#999;transform:scaleX(0.8729);">Tags</span>
<span class="t" style="left:321.81px;top:260px;font-size:16px;color:#999;transform:scaleX(0.9882);">Location</span>
<span class="t" style="left:773.03px;top:260px;font-size:16px;color:#999;transform:scaleX(0.9651);">Housekeeping assignment status</span>
<div class="b" style="left:322.5px;top:211px;width:443px;height:34px;background:#fff;border:1px solid #ccc"></div>
<div class="b" style="left:773px;top:211px;width:444px;height:34px;background:#fff;border:1px solid #ccc"></div>
<div class="b" style="left:1224.5px;top:211px;width:443px;height:32px;background:#fff;border:1px solid #ccc"></div>
<div class="b" style="left:322.5px;top:279px;width:443px;height:34px;background:#fff;border:1px solid #ccc"></div>
<div class="b" style="left:773px;top:279px;width:444px;height:34px;background:#fff;border:1px solid #ccc"></div>
<div class="b" style="left:328px;top:215px;width:210px;height:26px;background:#dcdcdc;border-radius:3px"></div>
<span class="t" style="left:332.50px;top:219px;font-size:18px;color:#222;transform:scaleX(0.9440);">6MIXD - 6 bed mixed dorm</span>
<div class="b" style="left:540px;top:215px;width:162px;height:26px;background:#dcdcdc;border-radius:3px"></div>
<span class="t" style="left:544.50px;top:219px;font-size:18px;color:#222;transform:scaleX(0.9070);">6FD.B - 1 bed in 6FD</span>
<div class="b" style="left:779.25px;top:215px;width:95.75px;height:26px;background:#dcdcdc;border-radius:3px"></div>
<span class="t" style="left:782.85px;top:219px;font-size:18px;color:#222;transform:scaleX(0.9018);">LS - Current</span>
<div class="b" style="left:878px;top:215px;width:160px;height:26px;background:#dcdcdc;border-radius:3px"></div>
<span class="t" style="left:882.08px;top:219px;font-size:18px;color:#222;transform:scaleX(0.9244);">FS - Change of linen</span>
<div class="b" style="left:328px;top:283px;width:82px;height:26px;background:#dcdcdc;border-radius:3px"></div>
<span class="t" style="left:332.50px;top:287px;font-size:18px;color:#222;transform:scaleX(0.9797);">2 - 2 floor</span>
<div class="b" style="left:779.25px;top:283px;width:17.75px;height:26px;background:#dcdcdc;border-radius:3px"></div>
<span class="t" style="left:782.92px;top:287px;font-size:18px;color:#222;transform:scaleX(0.8333);">D</span>
<div class="b" style="left:800px;top:283px;width:12px;height:26px;background:#dcdcdc;border-radius:3px"></div>
<span class="t" style="left:804.17px;top:287px;font-size:18px;color:#222;transform:scaleX(0.8333);">I</span>
<div class="b" style="left:1224.5px;top:278px;width:48.5px;height:25px;background:#dcdcdc;border-radius:13px"></div>
<div class="b" style="left:1226px;top:280px;width:21px;height:21px;background:#fff;border-radius:50%"></div>
<span class="t" style="left:1276.75px;top:282px;font-size:18px;color:#222;transform:scaleX(0.9258);">Assigned only</span>
<div class="b" style="left:1683px;top:278px;width:126px;height:36px;background:#2c79be;border-radius:3px"></div>
<svg class="i" style="left:1705.00px;top:287.69px;" width="18.57" height="18.57" viewBox="0 -1408 1664 1664" preserveAspectRatio="none"><path fill="#fff" transform="scale(1,-1)" d="M1020.5 387.5Q1152 519 1152 704Q1152 889 1020.5 1020.5Q889 1152 704 1152Q519 1152 387.5 1020.5Q256 889 256 704Q256 519 387.5 387.5Q519 256 704 256Q889 256 1020.5 387.5ZM1664 -128Q1664 -180 1626 -218Q1588 -256 1536 -256Q1482 -256 1446 -218L1103 124Q924 0 704 0Q561 0 430.5 55.5Q300 111 205.5 205.5Q111 300 55.5 430.5Q0 561 0 704Q0 847 55.5 977.5Q111 1108 205.5 1202.5Q300 1297 430.5 1352.5Q561 1408 704 1408Q847 1408 977.5 1352.5Q1108 1297 1202.5 1202.5Q1297 1108 1352.5 977.5Q1408 847 1408 704Q1408 484 1284 305L1627 -38Q1664 -75 1664 -128Z"/></svg>
<span class="t" style="left:1730.00px;top:287px;font-size:20px;color:#fff;transform:scaleX(0.8997);">Search</span>
<div class="b" style="left:1817px;top:278px;width:61px;height:36px;background:#fff;border:1px solid #ddd;border-radius:3px"></div>
<svg class="i" style="left:1840.00px;top:290.00px;" width="14.25" height="13.75" viewBox="110 -1170 1188 1188" preserveAspectRatio="none"><path fill="#444" transform="scale(1,-1)" d="M1270 146 1134 10Q1106 -18 1066 -18Q1026 -18 998 10L704 304L410 10Q382 -18 342 -18Q302 -18 274 10L138 146Q110 174 110 214Q110 254 138 282L432 576L138 870Q110 898 110 938Q110 978 138 1006L274 1142Q302 1170 342 1170Q382 1170 410 1142L704 848L998 1142Q1026 1170 1066 1170Q1106 1170 1134 1142L1270 1006Q1298 978 1298 938Q1298 898 1270 870L976 576L1270 282Q1298 254 1298 214Q1298 174 1270 146Z"/></svg>
<div class="b" style="left:298.4px;top:339px;width:1599.6px;height:542px;border:1px solid #c8c8c8;background:#fff"></div>
<div class="b" style="left:299px;top:371px;width:1598px;height:1px;background:#c8c8c8"></div>
<div class="b" style="left:299px;top:412px;width:1598px;height:1px;background:#c8c8c8"></div>
<div class="b" style="left:372.5px;top:341px;width:1px;height:31px;background:#c8c8c8"></div>
<div class="b" style="left:530.5px;top:341px;width:1px;height:31px;background:#c8c8c8"></div>
<div class="b" style="left:689.5px;top:341px;width:1px;height:31px;background:#c8c8c8"></div>
<div class="b" style="left:847.5px;top:341px;width:1px;height:31px;background:#c8c8c8"></div>
<div class="b" style="left:1007px;top:341px;width:1px;height:31px;background:#c8c8c8"></div>
<div class="b" style="left:1164.5px;top:341px;width:1px;height:31px;background:#c8c8c8"></div>
<div class="b" style="left:1324px;top:341px;width:1px;height:31px;background:#c8c8c8"></div>
<div class="b" style="left:1481.25px;top:341px;width:1px;height:31px;background:#c8c8c8"></div>
<div class="b" style="left:1640.75px;top:341px;width:1px;height:31px;background:#c8c8c8"></div>
<div class="b" style="left:1720px;top:341px;width:1px;height:31px;background:#c8c8c8"></div>
<div class="b" style="left:1875px;top:341px;width:1px;height:31px;background:#c8c8c8"></div>
<span class="t" style="left:380.00px;top:348px;font-size:17px;color:#444;transform:scaleX(0.9540);">Status</span>
<span class="t" style="left:538.00px;top:348px;font-size:17px;color:#444;transform:scaleX(0.9753);">Cleaning</span>
<span class="t" style="left:695.54px;top:348px;font-size:17px;color:#444;transform:scaleX(0.9562);">Room</span>
<span class="t" style="left:854.50px;top:348px;font-size:17px;color:#444;transform:scaleX(0.9634);">Created date</span>
<span class="t" style="left:1013.75px;top:348px;font-size:17px;color:#444;transform:scaleX(0.9785);">Completed date</span>
<span class="t" style="left:1172.00px;top:348px;font-size:17px;color:#444;transform:scaleX(0.9066);">Type</span>
<span class="t" style="left:1329.53px;top:348px;font-size:17px;color:#444;transform:scaleX(0.9715);">Room status</span>
<span class="t" style="left:1488.75px;top:348px;font-size:17px;color:#444;transform:scaleX(0.9040);">Guest</span>
<span class="t" style="left:1648.00px;top:348px;font-size:17px;color:#444;transform:scaleX(0.9814);">Q-ty</span>
<span class="t" style="left:1726.75px;top:348px;font-size:17px;color:#444;transform:scaleX(0.9563);">Stay date</span>
<div class="b" style="left:326px;top:347.5px;width:17px;height:17px;background:#fff;border:1px solid #c6c6c6;border-radius:1px"></div>
<div class="b" style="left:330px;top:351.25px;width:10.5px;height:9.5px;background:#333"></div>
<svg class="i" style="left:317px;top:425px" width="18" height="18" viewBox="0 0 18 18"><circle cx="8.7" cy="9" r="7.2" fill="none" stroke="#333" stroke-width="1.2"/><path d="M5.9 6.3l5.2 5.2M7.2 11.7h4.1v-4.1" fill="none" stroke="#333" stroke-width="1.3"/></svg>
<div class="b" style="left:339px;top:425px;width:17px;height:17.6px;background:#fff;border:1px solid #c6c6c6;border-radius:1px"></div>
<div class="b" style="left:342.6px;top:428.8px;width:10.4px;height:10px;background:#333"></div>
<span class="t" style="left:363.13px;top:426px;font-size:18px;color:#222;transform:scaleX(0.8671);font-weight:700;-webkit-text-stroke:0;">Housekeeper:</span>
<div class="b" style="left:866.5px;top:422px;width:25.5px;height:25.5px;border:1px solid #b0b0b0;border-radius:50%;background:#fff"></div>
<div class="b" style="left:299px;top:454px;width:1577px;height:1px;background:#ddd"></div>
<div class="b" style="left:345px;top:461px;width:18px;height:18px;background:#fff;border:1px solid #c6c6c6;border-radius:1px"></div>
<div class="b" style="left:376px;top:458px;width:63px;height:23px;background:#d4553f;border-radius:3px"></div>
<span class="t" style="left:385.88px;top:461px;font-size:18px;color:#fff;transform:scaleX(0.8708);">D</span>
<span class="t" style="left:401.59px;top:463px;font-size:15px;color:#f9b0a2;transform:scaleX(0.9068);">Dirty</span>
<div class="b" style="left:532px;top:463px;width:8px;height:14.5px;background:#f8958f;border-radius:2.5px"></div>
<span class="t" style="left:542.03px;top:462px;font-size:18px;color:#222;transform:scaleX(0.9687);">IN</span>
<span class="t" style="left:564.50px;top:464px;font-size:16px;color:#999;transform:scaleX(0.7049);">CHECK IN</span>
<div class="b" style="left:691px;top:463px;width:8px;height:14.5px;background:#add8e6;border-radius:2.5px"></div>
<span class="t" style="left:701.29px;top:462px;font-size:18px;color:#222;transform:scaleX(0.9084);">102.1</span>
<span class="t" style="left:854.50px;top:462px;font-size:18px;color:#333;transform:scaleX(0.9200);">2020. 08. 26. 2:42</span>
<div class="b" style="left:1166px;top:463px;width:8px;height:14.5px;background:#9bbb59;border-radius:2.5px"></div>
<span class="t" style="left:1177.00px;top:462px;font-size:18px;color:#222;transform:scaleX(0.8762);">6MIXD.B</span>
<span class="t" style="left:1330.70px;top:462px;font-size:18px;color:#444;transform:scaleX(0.9974);">Out of order</span>
<div class="b" style="left:334px;top:485px;width:1542px;height:30px;background:#f3f3f3"></div>
<div class="b" style="left:345px;top:491px;width:18px;height:18px;background:#fff;border:1px solid #c6c6c6;border-radius:1px"></div>
<div class="b" style="left:376px;top:488px;width:63px;height:23px;background:#d4553f;border-radius:3px"></div>
<span class="t" style="left:385.88px;top:491px;font-size:18px;color:#fff;transform:scaleX(0.8708);">D</span>
<span class="t" style="left:401.59px;top:493px;font-size:15px;color:#f9b0a2;transform:scaleX(0.9068);">Dirty</span>
<div class="b" style="left:532px;top:493px;width:8px;height:14.5px;background:#f8958f;border-radius:2.5px"></div>
<span class="t" style="left:542.03px;top:492px;font-size:18px;color:#222;transform:scaleX(0.9687);">IN</span>
<span class="t" style="left:564.50px;top:494px;font-size:16px;color:#999;transform:scaleX(0.7049);">CHECK IN</span>
<div class="b" style="left:691px;top:493px;width:8px;height:14.5px;background:#add8e6;border-radius:2.5px"></div>
<span class="t" style="left:701.29px;top:492px;font-size:18px;color:#222;transform:scaleX(0.9084);">109.1</span>
<span class="t" style="left:854.50px;top:492px;font-size:18px;color:#333;transform:scaleX(0.9200);">2020. 08. 26. 2:42</span>
<div class="b" style="left:1166px;top:493px;width:8px;height:14.5px;background:#9bbb59;border-radius:2.5px"></div>
<span class="t" style="left:1177.00px;top:492px;font-size:18px;color:#222;transform:scaleX(0.8762);">8MIXD.B</span>
<span class="t" style="left:1330.70px;top:492px;font-size:18px;color:#444;transform:scaleX(0.9974);">Out of order</span>
<div class="b" style="left:345px;top:521px;width:18px;height:18px;background:#fff;border:1px solid #c6c6c6;border-radius:1px"></div>
<div class="b" style="left:376px;top:518px;width:63px;height:23px;background:#d4553f;border-radius:3px"></div>
<span class="t" style="left:385.88px;top:521px;font-size:18px;color:#fff;transform:scaleX(0.8708);">D</span>
<span class="t" style="left:401.59px;top:523px;font-size:15px;color:#f9b0a2;transform:scaleX(0.9068);">Dirty</span>
<div class="b" style="left:532px;top:523px;width:8px;height:14.5px;background:#0a0aee;border-radius:2.5px"></div>
<span class="t" style="left:543.00px;top:522px;font-size:18px;color:#222;transform:scaleX(0.8421);">OUT</span>
<span class="t" style="left:580.50px;top:524px;font-size:16px;color:#999;transform:scaleX(0.7466);">Check out</span>
<div class="b" style="left:691px;top:523px;width:8px;height:14.5px;background:#90ee90;border-radius:2.5px"></div>
<span class="t" style="left:702.20px;top:522px;font-size:18px;color:#222;transform:scaleX(0.8994);">401</span>
<span class="t" style="left:854.50px;top:522px;font-size:18px;color:#333;transform:scaleX(0.9200);">2020. 08. 26. 2:42</span>
<div class="b" style="left:1166px;top:523px;width:8px;height:14.5px;background:#8064a2;border-radius:2.5px"></div>
<span class="t" style="left:1177.00px;top:522px;font-size:18px;color:#222;transform:scaleX(0.8374);">2BUDGET</span>
<span class="t" style="left:1330.70px;top:522px;font-size:18px;color:#444;transform:scaleX(0.9195);">Vacant</span>
<div class="b" style="left:334px;top:545px;width:1542px;height:30px;background:#f3f3f3"></div>
<div class="b" style="left:345px;top:551px;width:18px;height:18px;background:#fff;border:1px solid #c6c6c6;border-radius:1px"></div>
<div class="b" style="left:376px;top:548px;width:63px;height:23px;background:#d4553f;border-radius:3px"></div>
<span class="t" style="left:385.88px;top:551px;font-size:18px;color:#fff;transform:scaleX(0.8708);">D</span>
<span class="t" style="left:401.59px;top:553px;font-size:15px;color:#f9b0a2;transform:scaleX(0.9068);">Dirty</span>
<div class="b" style="left:532px;top:553px;width:8px;height:14.5px;background:#f01414;border-radius:2.5px"></div>
<span class="t" style="left:543.00px;top:552px;font-size:18px;color:#222;transform:scaleX(0.9234);">OUT-IN</span>
<div class="b" style="left:0;top:0;width:690.5px;height:1003px;overflow:hidden">
<span class="t" style="left:604.00px;top:554px;font-size:16px;color:#999;transform:scaleX(0.7400);">Check Out - Check In</span>
</div>
<div class="b" style="left:691px;top:553px;width:8px;height:14.5px;background:#90ee90;border-radius:2.5px"></div>
<span class="t" style="left:702.20px;top:552px;font-size:18px;color:#222;transform:scaleX(0.8994);">403</span>
<span class="t" style="left:854.50px;top:552px;font-size:18px;color:#333;transform:scaleX(0.9200);">2020. 08. 26. 2:42</span>
<div class="b" style="left:1166px;top:553px;width:8px;height:14.5px;background:#8064a2;border-radius:2.5px"></div>
<span class="t" style="left:1177.00px;top:552px;font-size:18px;color:#222;transform:scaleX(0.8374);">2BUDGET</span>
<span class="t" style="left:1330.70px;top:552px;font-size:18px;color:#444;transform:scaleX(0.9195);">Vacant</span>
<div class="b" style="left:345px;top:581px;width:18px;height:18px;background:#fff;border:1px solid #c6c6c6;border-radius:1px"></div>
<div class="b" style="left:376px;top:578px;width:63px;height:23px;background:#d4553f;border-radius:3px"></div>
<span class="t" style="left:385.88px;top:581px;font-size:18px;color:#fff;transform:scaleX(0.8708);">D</span>
<span class="t" style="left:401.59px;top:583px;font-size:15px;color:#f9b0a2;transform:scaleX(0.9068);">Dirty</span>
<div class="b" style="left:532px;top:583px;width:8px;height:14.5px;background:#0a0aee;border-radius:2.5px"></div>
<span class="t" style="left:543.00px;top:582px;font-size:18px;color:#222;transform:scaleX(0.8421);">OUT</span>
<span class="t" style="left:580.50px;top:584px;font-size:16px;color:#999;transform:scaleX(0.7466);">Check out</span>
<div class="b" style="left:691px;top:583px;width:8px;height:14.5px;background:#add8e6;border-radius:2.5px"></div>
<span class="t" style="left:702.20px;top:582px;font-size:18px;color:#222;transform:scaleX(0.8882);">404.1</span>
<span class="t" style="left:854.50px;top:582px;font-size:18px;color:#333;transform:scaleX(0.9200);">2020. 08. 26. 2:42</span>
<div class="b" style="left:1166px;top:583px;width:8px;height:14.5px;background:#9bbb59;border-radius:2.5px"></div>
<span class="t" style="left:1177.00px;top:582px;font-size:18px;color:#222;transform:scaleX(0.8762);">6MIXD.B</span>
<span class="t" style="left:1330.70px;top:582px;font-size:18px;color:#444;transform:scaleX(0.9195);">Vacant</span>
<span class="t" style="left:1647.01px;top:582px;font-size:18px;color:#333;transform:scaleX(0.9916);">1 adult</span>
<span class="t" style="left:1864.60px;top:582px;font-size:18px;color:#333;transform:scaleX(0.9000);">2</span>
<div class="b" style="left:334px;top:605px;width:1542px;height:30px;background:#f3f3f3"></div>
<div class="b" style="left:345px;top:611px;width:18px;height:18px;background:#fff;border:1px solid #c6c6c6;border-radius:1px"></div>
<div class="b" style="left:376px;top:608px;width:63px;height:23px;background:#d4553f;border-radius:3px"></div>
<span class="t" style="left:385.88px;top:611px;font-size:18px;color:#fff;transform:scaleX(0.8708);">D</span>
<span class="t" style="left:401.59px;top:613px;font-size:15px;color:#f9b0a2;transform:scaleX(0.9068);">Dirty</span>
<div class="b" style="left:532px;top:613px;width:8px;height:14.5px;background:#0a0aee;border-radius:2.5px"></div>
<span class="t" style="left:543.00px;top:612px;font-size:18px;color:#222;transform:scaleX(0.8421);">OUT</span>
<span class="t" style="left:580.50px;top:614px;font-size:16px;color:#999;transform:scaleX(0.7466);">Check out</span>
<div class="b" style="left:691px;top:613px;width:8px;height:14.5px;background:#add8e6;border-radius:2.5px"></div>
<span class="t" style="left:702.20px;top:612px;font-size:18px;color:#222;transform:scaleX(0.8882);">404.5</span>
<span class="t" style="left:854.50px;top:612px;font-size:18px;color:#333;transform:scaleX(0.9200);">2020. 08. 26. 2:42</span>
<div class="b" style="left:1166px;top:613px;width:8px;height:14.5px;background:#9bbb59;border-radius:2.5px"></div>
<span class="t" style="left:1177.00px;top:612px;font-size:18px;color:#222;transform:scaleX(0.8762);">6MIXD.B</span>
<span class="t" style="left:1330.70px;top:612px;font-size:18px;color:#444;transform:scaleX(0.9195);">Vacant</span>
<div class="b" style="left:345px;top:641px;width:18px;height:18px;background:#fff;border:1px solid #c6c6c6;border-radius:1px"></div>
<div class="b" style="left:376px;top:638px;width:63px;height:23px;background:#d4553f;border-radius:3px"></div>
<span class="t" style="left:385.88px;top:641px;font-size:18px;color:#fff;transform:scaleX(0.8708);">D</span>
<span class="t" style="left:401.59px;top:643px;font-size:15px;color:#f9b0a2;transform:scaleX(0.9068);">Dirty</span>
<div class="b" style="left:532px;top:643px;width:8px;height:14.5px;background:#0a0aee;border-radius:2.5px"></div>
<span class="t" style="left:543.00px;top:642px;font-size:18px;color:#222;transform:scaleX(0.8421);">OUT</span>
<span class="t" style="left:580.50px;top:644px;font-size:16px;color:#999;transform:scaleX(0.7466);">Check out</span>
<div class="b" style="left:691px;top:643px;width:8px;height:14.5px;background:#90ee90;border-radius:2.5px"></div>
<span class="t" style="left:702.20px;top:642px;font-size:18px;color:#222;transform:scaleX(0.8994);">405</span>
<span class="t" style="left:854.50px;top:642px;font-size:18px;color:#333;transform:scaleX(0.9200);">2020. 08. 26. 2:42</span>
<div class="b" style="left:1166px;top:643px;width:8px;height:14.5px;background:#8064a2;border-radius:2.5px"></div>
<span class="t" style="left:1177.00px;top:642px;font-size:18px;color:#222;transform:scaleX(0.8220);">6BFS</span>
<span class="t" style="left:1330.70px;top:642px;font-size:18px;color:#444;transform:scaleX(0.9195);">Vacant</span>
<div class="b" style="left:334px;top:665px;width:1542px;height:30px;background:#f3f3f3"></div>
<div class="b" style="left:345px;top:671px;width:18px;height:18px;background:#fff;border:1px solid #c6c6c6;border-radius:1px"></div>
<div class="b" style="left:376px;top:668px;width:63px;height:23px;background:#d4553f;border-radius:3px"></div>
<span class="t" style="left:385.88px;top:671px;font-size:18px;color:#fff;transform:scaleX(0.8708);">D</span>
<span class="t" style="left:401.59px;top:673px;font-size:15px;color:#f9b0a2;transform:scaleX(0.9068);">Dirty</span>
<div class="b" style="left:532px;top:673px;width:8px;height:14.5px;background:#0a0aee;border-radius:2.5px"></div>
<span class="t" style="left:543.00px;top:672px;font-size:18px;color:#222;transform:scaleX(0.8421);">OUT</span>
<span class="t" style="left:580.50px;top:674px;font-size:16px;color:#999;transform:scaleX(0.7466);">Check out</span>
<div class="b" style="left:691px;top:673px;width:8px;height:14.5px;background:#add8e6;border-radius:2.5px"></div>
<span class="t" style="left:702.20px;top:672px;font-size:18px;color:#222;transform:scaleX(0.8882);">406.1</span>
<span class="t" style="left:854.50px;top:672px;font-size:18px;color:#333;transform:scaleX(0.9200);">2020. 08. 26. 2:42</span>
<div class="b" style="left:1166px;top:673px;width:8px;height:14.5px;background:#9bbb59;border-radius:2.5px"></div>
<span class="t" style="left:1177.00px;top:672px;font-size:18px;color:#222;transform:scaleX(0.8762);">8MIXD.B</span>
<span class="t" style="left:1330.70px;top:672px;font-size:18px;color:#444;transform:scaleX(0.9676);">Occupied</span>
<div class="b" style="left:345px;top:701px;width:18px;height:18px;background:#fff;border:1px solid #c6c6c6;border-radius:1px"></div>
<div class="b" style="left:376px;top:698px;width:63px;height:23px;background:#d4553f;border-radius:3px"></div>
<span class="t" style="left:385.88px;top:701px;font-size:18px;color:#fff;transform:scaleX(0.8708);">D</span>
<span class="t" style="left:401.59px;top:703px;font-size:15px;color:#f9b0a2;transform:scaleX(0.9068);">Dirty</span>
<div class="b" style="left:532px;top:703px;width:8px;height:14.5px;background:#0a0aee;border-radius:2.5px"></div>
<span class="t" style="left:543.00px;top:702px;font-size:18px;color:#222;transform:scaleX(0.8421);">OUT</span>
<span class="t" style="left:580.50px;top:704px;font-size:16px;color:#999;transform:scaleX(0.7466);">Check out</span>
<div class="b" style="left:691px;top:703px;width:8px;height:14.5px;background:#90ee90;border-radius:2.5px"></div>
<span class="t" style="left:702.20px;top:702px;font-size:18px;color:#222;transform:scaleX(0.8994);">407</span>
<span class="t" style="left:854.50px;top:702px;font-size:18px;color:#333;transform:scaleX(0.9200);">2020. 08. 26. 2:42</span>
<div class="b" style="left:1166px;top:703px;width:8px;height:14.5px;background:#8064a2;border-radius:2.5px"></div>
<span class="t" style="left:1177.00px;top:702px;font-size:18px;color:#222;transform:scaleX(0.8220);">4BFS</span>
<span class="t" style="left:1330.70px;top:702px;font-size:18px;color:#444;transform:scaleX(0.9195);">Vacant</span>
<div class="b" style="left:334px;top:725px;width:1542px;height:30px;background:#d5e4f1"></div>
<div class="b" style="left:345px;top:731px;width:18px;height:18px;background:#fff;border:1px solid #c6c6c6;border-radius:1px"></div>
<svg class="i" style="left:345px;top:731px" width="18" height="18" viewBox="0 0 18 18"><path d="M3.6 9.2L7.6 13.4L14.9 4.6" fill="none" stroke="#151515" stroke-width="2.7" stroke-linejoin="miter"/></svg>
<div class="b" style="left:376px;top:728px;width:63px;height:23px;background:#d4553f;border-radius:3px"></div>
<span class="t" style="left:385.88px;top:731px;font-size:18px;color:#fff;transform:scaleX(0.8708);">D</span>
<span class="t" style="left:401.59px;top:733px;font-size:15px;color:#f9b0a2;transform:scaleX(0.9068);">Dirty</span>
<div class="b" style="left:532px;top:733px;width:8px;height:14.5px;background:#f8958f;border-radius:2.5px"></div>
<span class="t" style="left:542.03px;top:732px;font-size:18px;color:#111;transform:scaleX(0.9687);">IN</span>
<span class="t" style="left:564.50px;top:734px;font-size:16px;color:#777;transform:scaleX(0.7049);">CHECK IN</span>
<div class="b" style="left:691px;top:733px;width:8px;height:14.5px;background:#add8e6;border-radius:2.5px"></div>
<span class="t" style="left:702.20px;top:732px;font-size:18px;color:#111;transform:scaleX(0.8882);">408.1</span>
<span class="t" style="left:854.50px;top:732px;font-size:18px;color:#111;transform:scaleX(0.9200);">2020. 08. 26. 2:42</span>
<div class="b" style="left:1166px;top:733px;width:8px;height:14.5px;background:#9bbb59;border-radius:2.5px"></div>
<span class="t" style="left:1176.11px;top:732px;font-size:18px;color:#111;transform:scaleX(0.8948);">10MIXD.B</span>
<span class="t" style="left:1330.70px;top:732px;font-size:18px;color:#111;transform:scaleX(0.9195);">Vacant</span>
<div class="b" style="left:334px;top:755px;width:1542px;height:30px;background:#d5e4f1"></div>
<div class="b" style="left:345px;top:761px;width:18px;height:18px;background:#fff;border:1px solid #c6c6c6;border-radius:1px"></div>
<svg class="i" style="left:345px;top:761px" width="18" height="18" viewBox="0 0 18 18"><path d="M3.6 9.2L7.6 13.4L14.9 4.6" fill="none" stroke="#151515" stroke-width="2.7" stroke-linejoin="miter"/></svg>
<div class="b" style="left:376px;top:758px;width:63px;height:23px;background:#d4553f;border-radius:3px"></div>
<span class="t" style="left:385.88px;top:761px;font-size:18px;color:#fff;transform:scaleX(0.8708);">D</span>
<span class="t" style="left:401.59px;top:763px;font-size:15px;color:#f9b0a2;transform:scaleX(0.9068);">Dirty</span>
<div class="b" style="left:532px;top:763px;width:8px;height:14.5px;background:#0a0aee;border-radius:2.5px"></div>
<span class="t" style="left:543.00px;top:762px;font-size:18px;color:#111;transform:scaleX(0.8421);">OUT</span>
<span class="t" style="left:580.50px;top:764px;font-size:16px;color:#777;transform:scaleX(0.7466);">Check out</span>
<div class="b" style="left:691px;top:763px;width:8px;height:14.5px;background:#add8e6;border-radius:2.5px"></div>
<span class="t" style="left:702.20px;top:762px;font-size:18px;color:#111;transform:scaleX(0.8882);">408.2</span>
<span class="t" style="left:854.50px;top:762px;font-size:18px;color:#111;transform:scaleX(0.9200);">2020. 08. 26. 2:42</span>
<div class="b" style="left:1166px;top:763px;width:8px;height:14.5px;background:#9bbb59;border-radius:2.5px"></div>
<span class="t" style="left:1176.11px;top:762px;font-size:18px;color:#111;transform:scaleX(0.8948);">10MIXD.B</span>
<span class="t" style="left:1330.70px;top:762px;font-size:18px;color:#111;transform:scaleX(0.9195);">Vacant</span>
<div class="b" style="left:334px;top:785px;width:1542px;height:30px;background:#f3f3f3"></div>
<div class="b" style="left:345px;top:791px;width:18px;height:18px;background:#fff;border:1px solid #c6c6c6;border-radius:1px"></div>
<div class="b" style="left:376px;top:788px;width:63px;height:23px;background:#d4553f;border-radius:3px"></div>
<span class="t" style="left:385.88px;top:791px;font-size:18px;color:#fff;transform:scaleX(0.8708);">D</span>
<span class="t" style="left:401.59px;top:793px;font-size:15px;color:#f9b0a2;transform:scaleX(0.9068);">Dirty</span>
<div class="b" style="left:532px;top:793px;width:8px;height:14.5px;background:#0a0aee;border-radius:2.5px"></div>
<span class="t" style="left:543.00px;top:792px;font-size:18px;color:#222;transform:scaleX(0.8421);">OUT</span>
<span class="t" style="left:580.50px;top:794px;font-size:16px;color:#999;transform:scaleX(0.7466);">Check out</span>
<div class="b" style="left:691px;top:793px;width:8px;height:14.5px;background:#add8e6;border-radius:2.5px"></div>
<span class="t" style="left:702.20px;top:792px;font-size:18px;color:#222;transform:scaleX(0.8882);">408.3</span>
<span class="t" style="left:854.50px;top:792px;font-size:18px;color:#333;transform:scaleX(0.9200);">2020. 08. 26. 2:42</span>
<div class="b" style="left:1166px;top:793px;width:8px;height:14.5px;background:#9bbb59;border-radius:2.5px"></div>
<span class="t" style="left:1176.11px;top:792px;font-size:18px;color:#222;transform:scaleX(0.8948);">10MIXD.B</span>
<span class="t" style="left:1330.70px;top:792px;font-size:18px;color:#444;transform:scaleX(0.9195);">Vacant</span>
<div class="b" style="left:345px;top:821px;width:18px;height:18px;background:#fff;border:1px solid #c6c6c6;border-radius:1px"></div>
<div class="b" style="left:376px;top:818px;width:63px;height:23px;background:#d4553f;border-radius:3px"></div>
<span class="t" style="left:385.88px;top:821px;font-size:18px;color:#fff;transform:scaleX(0.8708);">D</span>
<span class="t" style="left:401.59px;top:823px;font-size:15px;color:#f9b0a2;transform:scaleX(0.9068);">Dirty</span>
<div class="b" style="left:532px;top:823px;width:8px;height:14.5px;background:#0a0aee;border-radius:2.5px"></div>
<span class="t" style="left:543.00px;top:822px;font-size:18px;color:#222;transform:scaleX(0.8421);">OUT</span>
<span class="t" style="left:580.50px;top:824px;font-size:16px;color:#999;transform:scaleX(0.7466);">Check out</span>
<div class="b" style="left:691px;top:823px;width:8px;height:14.5px;background:#add8e6;border-radius:2.5px"></div>
<span class="t" style="left:702.20px;top:822px;font-size:18px;color:#222;transform:scaleX(0.8882);">408.4</span>
<span class="t" style="left:854.50px;top:822px;font-size:18px;color:#333;transform:scaleX(0.9200);">2020. 08. 26. 2:42</span>
<div class="b" style="left:1166px;top:823px;width:8px;height:14.5px;background:#9bbb59;border-radius:2.5px"></div>
<span class="t" style="left:1176.11px;top:822px;font-size:18px;color:#222;transform:scaleX(0.8948);">10MIXD.B</span>
<span class="t" style="left:1330.70px;top:822px;font-size:18px;color:#444;transform:scaleX(0.9195);">Vacant</span>
<span class="t" style="left:1647.01px;top:822px;font-size:18px;color:#333;transform:scaleX(0.9916);">1 adult</span>
<span class="t" style="left:1864.60px;top:822px;font-size:18px;color:#333;transform:scaleX(0.9000);">3</span>
<div class="b" style="left:334px;top:845px;width:1542px;height:30px;background:#f3f3f3"></div>
<div class="b" style="left:345px;top:851px;width:18px;height:18px;background:#fff;border:1px solid #c6c6c6;border-radius:1px"></div>
<div class="b" style="left:376px;top:848px;width:63px;height:23px;background:#d4553f;border-radius:3px"></div>
<span class="t" style="left:385.88px;top:851px;font-size:18px;color:#fff;transform:scaleX(0.8708);">D</span>
<span class="t" style="left:401.59px;top:853px;font-size:15px;color:#f9b0a2;transform:scaleX(0.9068);">Dirty</span>
<div class="b" style="left:532px;top:853px;width:8px;height:14.5px;background:#ffff00;border-radius:2.5px"></div>
<span class="t" style="left:541.86px;top:852px;font-size:18px;color:#222;transform:scaleX(0.8424);">LS</span>
<span class="t" style="left:566.00px;top:854px;font-size:16px;color:#999;transform:scaleX(0.7532);">Current</span>
<div class="b" style="left:691px;top:853px;width:8px;height:14.5px;background:#add8e6;border-radius:2.5px"></div>
<span class="t" style="left:702.20px;top:852px;font-size:18px;color:#222;transform:scaleX(0.8882);">408.5</span>
<span class="t" style="left:854.50px;top:852px;font-size:18px;color:#333;transform:scaleX(0.9200);">2020. 08. 26. 2:42</span>
<div class="b" style="left:1166px;top:853px;width:8px;height:14.5px;background:#9bbb59;border-radius:2.5px"></div>
<span class="t" style="left:1176.11px;top:852px;font-size:18px;color:#222;transform:scaleX(0.8948);">10MIXD.B</span>
<span class="t" style="left:1330.70px;top:852px;font-size:18px;color:#444;transform:scaleX(0.9676);">Occupied</span>
<span class="t" style="left:1647.01px;top:852px;font-size:18px;color:#333;transform:scaleX(0.9916);">1 adult</span>
<span class="t" style="left:1864.60px;top:852px;font-size:18px;color:#333;transform:scaleX(0.9000);">8</span>
<div class="b" style="left:376px;top:878px;width:63px;height:3px;background:#d4553f;border-radius:3px 3px 0 0"></div>
<div class="b" style="left:1478px;top:578px;width:145px;height:22px;background-color:#fdfdfd;background-image:radial-gradient(#d9d9d9 0.6px,transparent 0.9px);background-size:3px 3px;border-radius:12px;opacity:.9"></div>
<div class="b" style="left:1482px;top:818px;width:130px;height:26px;background-color:#fdfdfd;background-image:radial-gradient(#d9d9d9 0.6px,transparent 0.9px);background-size:3px 3px;border-radius:12px;opacity:.9"></div>
<div class="b" style="left:1487px;top:849px;width:88px;height:23px;background-color:#fbfbfb;background-image:radial-gradient(#d9d9d9 0.6px,transparent 0.9px);background-size:3px 3px;border-radius:12px;opacity:.9"></div>
<svg class="i" style="left:1883.50px;top:418.50px;" width="6.50" height="3.80" viewBox="0 -832 1024 576" preserveAspectRatio="none"><path fill="#666" transform="scale(1,-1)" d="M960 256H64Q38 256 19 275Q0 294 0 320Q0 346 19 365L467 813Q486 832 512 832Q538 832 557 813L1005 365Q1024 346 1024 320Q1024 294 1005 275Q986 256 960 256Z"/></svg>
<svg class="i" style="left:1883.50px;top:869.80px;" width="6.70" height="3.80" viewBox="0 -896 1024 576" preserveAspectRatio="none"><path fill="#666" transform="scale(1,-1)" d="M1005 787 557 339Q538 320 512 320Q486 320 467 339L19 787Q0 806 0 832Q0 858 19 877Q38 896 64 896H960Q986 896 1005 877Q1024 858 1024 832Q1024 806 1005 787Z"/></svg>
<div class="b" style="left:1884px;top:428px;width:5px;height:154px;background:#d3d3d3"></div>
<div class="b" style="left:298.4px;top:880px;width:1599.6px;height:1px;background:#c8c8c8"></div>
<div class="b" style="left:297px;top:888px;width:158px;height:36px;background:#3a9c53;border:1px solid #348b4a;border-radius:3px"></div>
<span class="t" style="left:318.81px;top:897px;font-size:19px;color:#f0fff0;transform:scaleX(0.9855);">Mark as done</span>
<div class="b" style="left:298.4px;top:184px;width:1589.6px;height:144.8px;border:5px solid #db2530;border-radius:25px"></div>
<div class="b" style="left:274.2px;top:871.8px;width:201.6px;height:68.1px;border:5px solid #db2530;border-radius:28px"></div>
<div class="b" style="left:20px;top:967px;width:72px;height:29.5px;background:#fff;border-radius:3px;border:1px solid #e0e0e0"></div>
<svg class="i" style="left:29.00px;top:976.25px;" width="15.00" height="15.00" viewBox="0 -1408 1536 1536" preserveAspectRatio="none"><path fill="#555" transform="scale(1,-1)" d="M896 160V352Q896 366 887 375Q878 384 864 384H672Q658 384 649 375Q640 366 640 352V160Q640 146 649 137Q658 128 672 128H864Q878 128 887 137Q896 146 896 160ZM1152 832Q1152 920 1096.5 995Q1041 1070 958 1111Q875 1152 788 1152Q545 1152 417 939Q402 915 425 897L557 797Q564 791 576 791Q592 791 601 803Q654 871 687 895Q721 919 773 919Q821 919 858.5 893Q896 867 896 834Q896 796 876 773Q856 750 808 728Q745 700 692.5 641.5Q640 583 640 516V480Q640 466 649 457Q658 448 672 448H864Q878 448 887 457Q896 466 896 480Q896 499 917.5 529.5Q939 560 972 579Q1004 597 1021 607.5Q1038 618 1067 642.5Q1096 667 1111.5 690.5Q1127 714 1139.5 751Q1152 788 1152 832ZM1433 1025.5Q1536 849 1536 640Q1536 431 1433 254.5Q1330 78 1153.5 -25Q977 -128 768 -128Q559 -128 382.5 -25Q206 78 103 254.5Q0 431 0 640Q0 849 103 1025.5Q206 1202 382.5 1305Q559 1408 768 1408Q977 1408 1153.5 1305Q1330 1202 1433 1025.5Z"/></svg>
<span class="t" style="left:48.54px;top:974px;font-size:18px;color:#666;transform:scaleX(0.9581);">Help</span>
<span class="t" style="left:1686.70px;top:973px;font-size:18px;color:#fff;transform:scaleX(0.8688);font-weight:700;-webkit-text-stroke:0;">2020. augusztus 26., szerda</span>
</div>
</body></html>
